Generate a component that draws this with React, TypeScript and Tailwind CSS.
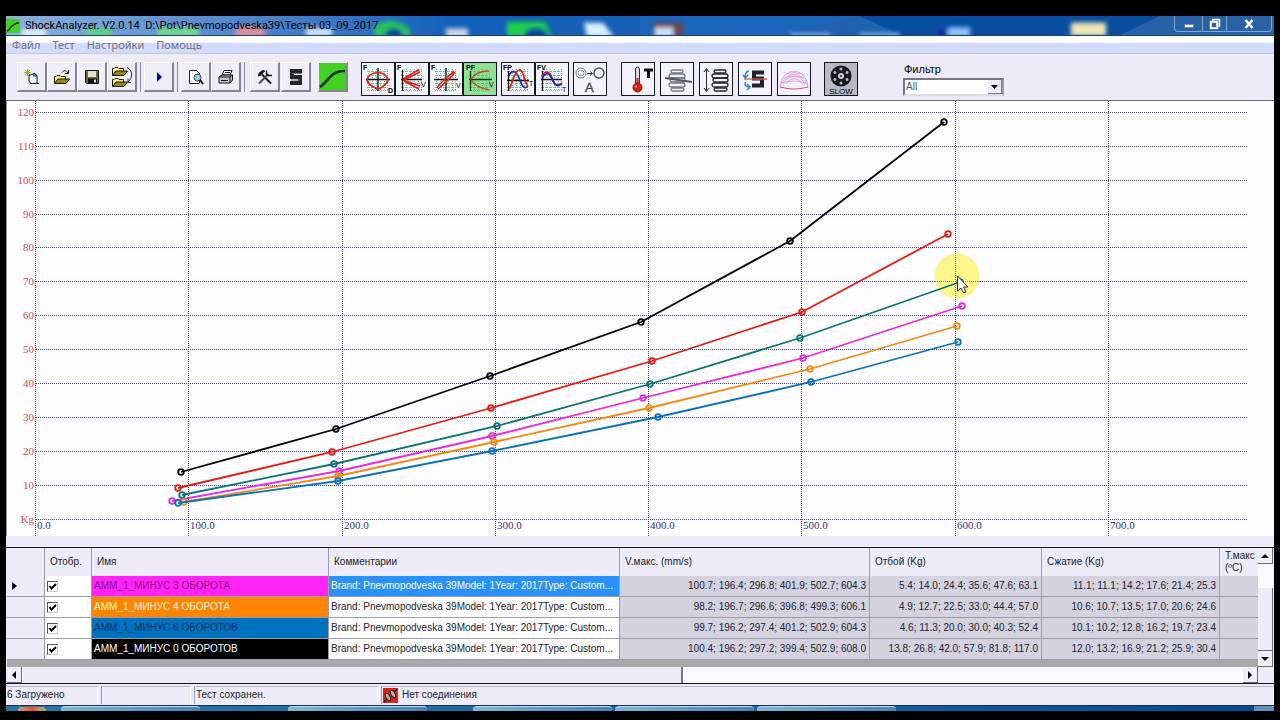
import { useState } from "react";
import type { ReactNode } from "react";

type Series = {
  id: string;
  color: string;
  points: [number, number][];
};

const series: Series[] = [
  { id: "m0", color: "#000000", points: [[181, 472], [336, 429], [490, 376], [641, 322], [790, 241], [944, 122]] },
  { id: "m1", color: "#e81a10", points: [[178, 488], [332, 452], [491, 408], [652, 361], [802, 312], [948, 234]] },
  { id: "m2", color: "#0a7472", points: [[182, 495], [334, 464], [497, 426], [650, 384], [800, 338], [960, 282]] },
  { id: "m3", color: "#e829dc", points: [[172, 501], [339, 471], [492, 436], [643, 398], [803, 358], [962, 306]] },
  { id: "m4", color: "#f08a14", points: [[184, 502], [338, 476], [494, 442], [649, 408], [810, 369], [957, 326]] },
  { id: "m6", color: "#0b72b8", points: [[178, 503], [338, 481], [492, 451], [658, 417], [811, 382], [958, 342]] },
];

const xTicks = [36, 189, 343, 496, 649, 802, 956, 1109];
const yTicks = [519, 485, 451, 417, 383, 349, 315, 281, 247, 214, 180, 146, 112];

const comment = "Brand: Pnevmopodveska 39Model: 1Year: 2017Type: Custom...";

const rows = [
  {
    name: "АММ_1_МИНУС 3 ОБОРОТА",
    nameClass: "bg-[#ff24f4] text-[#8a1590]",
    speed: "100.7; 196.4; 296.8; 401.9; 502.7; 604.3",
    rebound: "5.4; 14.0; 24.4; 35.6; 47.6; 63.1",
    compression: "11.1; 11.1; 14.2; 17.6; 21.4; 25.3",
  },
  {
    name: "АММ_1_МИНУС 4 ОБОРОТА",
    nameClass: "bg-[#ff8400] text-[#fff3dc]",
    speed: "98.2; 196.7; 296.6; 396.8; 499.3; 606.1",
    rebound: "4.9; 12.7; 22.5; 33.0; 44.4; 57.0",
    compression: "10.6; 10.7; 13.5; 17.0; 20.6; 24.6",
  },
  {
    name: "АММ_1_МИНУС 6 ОБОРОТОВ",
    nameClass: "bg-[#0072c0] text-[#06315f]",
    speed: "99.7; 196.2; 297.4; 401.2; 502.9; 604.3",
    rebound: "4.6; 11.3; 20.0; 30.0; 40.3; 52.4",
    compression: "10.1; 10.2; 12.8; 16.2; 19.7; 23.4",
  },
  {
    name: "АММ_1_МИНУС 0 ОБОРОТОВ",
    nameClass: "bg-black text-white",
    speed: "100.4; 196.2; 297.2; 399.4; 502.9; 608.0",
    rebound: "13.8; 26.8; 42.0; 57.9; 81.8; 117.0",
    compression: "12.0; 13.2; 16.9; 21.2; 25.9; 30.4",
  },
];

function ToolButton({ label, children }: { label: string; children: ReactNode }) {
  return (
    <button
      type="button"
      aria-label={label}
      className="flex h-[30px] w-[30px] items-center justify-center border-t border-r-2 border-b-2 border-l border-t-white border-r-[#85858f] border-b-[#85858f] border-l-white bg-[#efeef8]"
    >
      {children}
    </button>
  );
}

function ModeButton({ label, className = "bg-[#f3f3fb]", children }: { label: string; className?: string; children: ReactNode }) {
  return (
    <button type="button" aria-label={label} className={`h-[34px] w-[34px] border border-[#15151c] ${className}`}>
      <svg viewBox="0 0 32 32" className="block h-full w-full" fontFamily="Liberation Sans, sans-serif">
        {children}
      </svg>
    </button>
  );
}

function Separator() {
  return <div className="mx-[3px] h-[30px] w-px bg-[#8d8d98]" />;
}

function IconGrid({ color = "#79bd92" }: { color?: string }) {
  return (
    <g stroke={color} strokeWidth="1" strokeDasharray="1 1">
      {[8.5, 12.5, 16.5, 20.5, 24.5, 27.5].map((p) => (
        <path key={p} d={`M5 ${p}H27M${p - 2} 6V28`} />
      ))}
    </g>
  );
}

function Folder({ y = 0, x = 0 }: { y?: number; x?: number }) {
  return (
    <g transform={`translate(${x} ${y})`} stroke="#1a1a00" strokeWidth="1">
      <path d="M.5 9.500V2.500H2L3 1.500H6L7 2.500H11.500V5" fill="#f5ec7a" />
      <path d="M.5 9.500 4 5H15.500L12 9.500Z" fill="#8f8a14" />
    </g>
  );
}

function Coil({ color, x }: { color: string; x: number }) {
  return (
    <g fill="none" stroke={color} strokeWidth="1.300" transform={`translate(${x} 0)`}>
      <rect x="2" y="7" width="12" height="3" rx="1.500" />
      <rect x="0" y="11" width="16" height="4" rx="2" />
      <rect x="1" y="15" width="15" height="4" rx="2" />
      <rect x="0" y="20" width="16" height="4" rx="2" />
      <rect x="2" y="25" width="13" height="3" rx="1.500" />
    </g>
  );
}

function TitleBar() {
  return (
    <header className="relative flex h-5 items-center justify-between overflow-hidden border-b border-[#1c3f78] bg-linear-to-r from-[#8bb1dd] via-[#1260ba] via-35% to-[#2a62a4]">
      {/* desktop icons showing through the glass */}
      <svg viewBox="6 16 1268 20" preserveAspectRatio="none" className="absolute inset-0 h-full w-full">
        <defs>
          <filter id="glass" x="-20%" y="-60%" width="140%" height="220%">
            <feGaussianBlur stdDeviation="2" />
          </filter>
        </defs>
        <path d="M640 16H860L780 36H640Z" fill="#1a6cc4" opacity=".5" />
        <path d="M860 16H1160L1120 36H900Z" fill="#024a9e" opacity=".8" />
        <g filter="url(#glass)">
          <rect x="22" y="30" width="24" height="8" fill="#e8f2f0" />
          <rect x="85" y="29" width="26" height="10" fill="#5dce86" />
          <rect x="157" y="28" width="42" height="10" fill="#6fd98b" />
          <ellipse cx="250" cy="33" rx="16" ry="7" fill="#d98f97" />
          <rect x="306" y="29" width="26" height="8" fill="#d8e9f8" />
          <path d="M374 38V27Q392 14 410 30V38Z" fill="#27c25c" />
          <ellipse cx="394" cy="36" rx="9" ry="7" fill="#0b4f94" />
          <rect x="446" y="29" width="22" height="10" fill="#c9d6e6" />
          <path d="M507 22H545L552 38H507Z" fill="#1fce4d" />
          <ellipse cx="536" cy="37" rx="12" ry="9" fill="#08489a" />
          <path d="M584 23H603L614 38H587Z" fill="#d5f1ff" />
          <rect x="653" y="23" width="30" height="14" fill="#6d4550" />
          <rect x="655" y="28" width="18" height="10" fill="#cfe0f6" />
          <rect x="790" y="34" width="40" height="4" fill="#7db6ee" />
          <rect x="860" y="34" width="40" height="4" fill="#7db6ee" />
          <rect x="938" y="31" width="10" height="8" fill="#1129a8" />
          <rect x="948" y="28" width="22" height="10" fill="#8fc4fb" />
          <rect x="1071" y="23" width="35" height="14" fill="#ebe6b4" />
        </g>
      </svg>
      <div className="relative flex items-center gap-[5px]">
        <svg viewBox="0 0 14 14" className="h-3.5 w-3.5">
          <rect width="14" height="14" fill="#43cf24" />
          <path d="M1 12C4 11 5 4 13 4" fill="none" stroke="#082c06" strokeWidth="1.500" />
        </svg>
        <h1 className="font-[Roboto,sans-serif] text-[11px] leading-4 whitespace-pre text-black">
          {"ShockAnalyzer. V2.0.14  D:\\Pot\\Pnevmopodveska39\\Тесты 03_09_2017"}
        </h1>
      </div>
      <div className="relative mr-0.5 flex h-4 self-start rounded-b border border-t-0 border-[#7fa6d4] text-white">
        <button type="button" aria-label="Свернуть" className="flex w-7 items-center justify-center border-r border-[#7fa6d4]">
          <svg viewBox="0 0 12 12" className="h-3 w-3">
            <rect x="1.500" y="6.500" width="9" height="3" fill="#fff" stroke="#536c8c" strokeWidth=".5" />
          </svg>
        </button>
        <button type="button" aria-label="Развернуть" className="flex w-6 items-center justify-center border-r border-[#7fa6d4]">
          <svg viewBox="0 0 12 12" className="h-3 w-3" fill="none" stroke="#fff" strokeWidth="1.500">
            <path d="M4 3V1.500H10.500V8H9" />
            <rect x="1.800" y="3.800" width="6.400" height="6.400" strokeWidth="2" />
          </svg>
        </button>
        <button type="button" aria-label="Закрыть" className="flex w-11 items-center justify-center">
          <svg viewBox="0 0 12 12" className="h-3 w-3" stroke="#fff" strokeWidth="2.500">
            <path d="M2.500 2 9.500 10M9.500 2 2.500 10" />
          </svg>
        </button>
      </div>
    </header>
  );
}

function Menu() {
  return (
    <nav className="flex h-[18px] items-center gap-3 border-b border-[#c3c9e2] bg-linear-to-b from-white from-35% to-[#d3dbfa] to-45% pl-1.5 font-['Noto_Sans',sans-serif] text-[11px] leading-4 text-[#73737f]">
      <a href="#file">Файл</a>
      <a href="#test">Тест</a>
      <a href="#settings">Настройки</a>
      <a href="#help">Помощь</a>
    </nav>
  );
}

function Toolbar() {
  const [filter, setFilter] = useState("All");

  return (
    <div className="flex h-[46px] items-start pt-2 pl-[11px]">
      <ToolButton label="Новый">
        <svg viewBox="0 0 16 16" className="h-4 w-4">
          <path d="M3.500 0V7M0 3.500H7M1 1 6 6M6 1 1 6" stroke="#a8a820" strokeWidth="1" />
          <path d="M5 6.500 10.500 4.500 13 7V14L7 14.500 5 12Z" fill="#fff" stroke="#18363a" strokeWidth="1.200" />
          <path d="M7 14.500H15M10 5V7H13" stroke="#18363a" strokeWidth="1.200" fill="none" />
        </svg>
      </ToolButton>
      <ToolButton label="Открыть">
        <svg viewBox="0 0 16 16" className="h-4 w-4">
          <Folder y={5} />
          <path d="M8 3.500C10 1 12 1 14 4M14.500 1V4.500H11" fill="none" stroke="#111" />
        </svg>
      </ToolButton>
      <ToolButton label="Сохранить">
        <svg viewBox="0 0 16 16" className="h-4 w-4">
          <path d="M1.500 1.500H14.500V14.500H2.500L1.500 13.500Z" fill="#6f7022" stroke="#111" />
          <rect x="4" y="2" width="8" height="6" fill="#dedee4" />
          <rect x="4" y="9.500" width="9" height="5" fill="#111" />
          <rect x="10" y="10.500" width="2" height="3" fill="#ddd" />
        </svg>
      </ToolButton>
      <ToolButton label="Открыть несколько">
        <svg viewBox="0 0 22 22" className="h-[22px] w-[22px]">
          <Folder x={1} y={0} />
          <Folder x={1} y={11} />
          <path d="M16 1.500C22 4 22 12 17 16M17 12.500V16.500H20" fill="none" stroke="#222" />
        </svg>
      </ToolButton>
      <Separator />
      <ToolButton label="Старт">
        <svg viewBox="0 0 16 16" className="h-4 w-4">
          <path d="M6 3V13L11 8Z" fill="#06108c" />
        </svg>
      </ToolButton>
      <Separator />
      <ToolButton label="Просмотр">
        <svg viewBox="0 0 16 16" className="h-4 w-4">
          <path d="M1.500 1.500H8.500L11.500 4.500V14.500H1.500Z" fill="#fff" stroke="#222" />
          <circle cx="9.500" cy="8.500" r="3.500" fill="#8fd3e0" stroke="#33474d" />
          <path d="m12 11 3 4" stroke="#111" strokeWidth="2" />
        </svg>
      </ToolButton>
      <ToolButton label="Печать">
        <svg viewBox="0 0 16 16" className="h-4 w-4" stroke="#111">
          <path d="M4 6 6 1.500H14L12 6Z" fill="#fff" />
          <path d="M1 8 4 6H14.500V11L12 14H1Z" fill="#c8c8ce" />
          <path d="M1 8H12V14M12 8 14.500 6M3 11.500H10M7 3.500H12" fill="none" />
        </svg>
      </ToolButton>
      <Separator />
      <div className="mr-[7px] ml-0.5 flex gap-px">
        <ToolButton label="Инструменты">
          <svg viewBox="0 0 16 16" className="h-4 w-4" fill="none" stroke="#161616">
            <path d="M5 5.500 14 14.500" strokeWidth="2" />
            <path d="M1 7 2 4 6 1 8 2 5 5 3 7Z" fill="#161616" strokeWidth=".5" />
            <path d="M2 14.500 11.500 5" strokeWidth="2" stroke="#4a4a4e" />
            <path d="M9.500 1.500V5L11.500 6.500H15" strokeWidth="1.500" />
          </svg>
        </ToolButton>
        <ToolButton label="Амортизатор">
          <svg viewBox="0 0 16 18" className="h-[18px] w-4" fill="none" stroke="#25252a" strokeWidth="4">
            <path d="M14 3H4V9H12V15H2" />
            <path d="M4 5.500H14M3 12H12" stroke="#777780" strokeWidth="1" />
          </svg>
        </ToolButton>
      </div>
      <ToolButton label="График">
        <svg viewBox="0 0 27 27" className="h-[27px] w-[27px] shrink-0">
          <rect width="27" height="27" fill="#43cf24" />
          <path d="M1 24C9 19 12 7 26 8" fill="none" stroke="#0a2e08" strokeWidth="2.500" />
        </svg>
      </ToolButton>

      <div className="ml-[13px] flex">
        <ModeButton label="F-D">
          <IconGrid />
          <path d="M16 5V28M4 16.500H28" stroke="#111" strokeWidth="1.300" />
          <path d="M5 17C6 12 9 10 16 9.500C22 10 25 12 26 17C25 22 20 24 16 26.500C11 24 6 22 5 17Z" fill="none" stroke="#dc2418" strokeWidth="1.700" />
          <text x="1" y="7" fontSize="7" fontWeight="bold">F</text>
          <text x="26" y="30" fontSize="7" fontWeight="bold">D</text>
        </ModeButton>
        <ModeButton label="F-V">
          <IconGrid />
          <path d="M6.500 7V28M5 16.500H26" stroke="#111" strokeWidth="1.300" />
          <path d="M7 16 23 6.500M8 17 24 9M7 17 24 23M8 18 23 26" fill="none" stroke="#dc2418" strokeWidth="1.500" />
          <text x="1" y="7" fontSize="7" fontWeight="bold">F</text>
          <text x="25" y="24" fontSize="7">V</text>
        </ModeButton>
        <ModeButton label="F-V общий">
          <IconGrid />
          <path d="M16 5V28M4 16.500H28" stroke="#111" strokeWidth="1.300" />
          <path d="M7 25C10 19 18 15 24 8M8 26C14 21 20 16 25 9" fill="none" stroke="#dc2418" strokeWidth="1.500" />
          <text x="1" y="7" fontSize="7" fontWeight="bold">F</text>
          <text x="26" y="25" fontSize="7">V</text>
        </ModeButton>
        <ModeButton label="PF-V" className="bg-[#8fe295]">
          <IconGrid color="#62be71" />
          <path d="M6.500 8V28M5 16.500H28" stroke="#163616" strokeWidth="1.300" />
          <path d="M7 16C11 10 17 8 25 8M7 17C12 24 18 25 25 27" fill="none" stroke="#c4482c" strokeWidth="1.300" />
          <text x="2" y="7" fontSize="7" fontWeight="bold">PF</text>
          <text x="25" y="24" fontSize="7">V</text>
        </ModeButton>
      </div>
      <div className="ml-1 flex">
        <ModeButton label="FP-T">
          <IconGrid />
          <path d="M6.500 8V28M5 17.500H27" stroke="#111" strokeWidth="1.300" />
          <path d="M7 13C9 7 14 7 17 15S22 27 26 23" fill="none" stroke="#1c22c8" strokeWidth="1.700" />
          <path d="M7 26C11 20 12 8 17 7S22 20 26 23" fill="none" stroke="#dc2418" strokeWidth="1.700" />
          <text x="1" y="7" fontSize="7" fontWeight="bold">FP</text>
          <text x="27" y="23" fontSize="7">T</text>
        </ModeButton>
        <ModeButton label="FV-T">
          <IconGrid />
          <path d="M6.500 8V28M5 16.500H26" stroke="#111" strokeWidth="1.300" />
          <path d="M6 14C9 7 14 8 16 15S22 25 26 20" fill="none" stroke="#dc2418" strokeWidth="1.700" />
          <path d="M6 16C9 9 13 9 16 16S21 23 26 21" fill="none" stroke="#1c22c8" strokeWidth="1.700" />
          <text x="1" y="7" fontSize="7" fontWeight="bold">FV</text>
          <text x="26" y="29" fontSize="7">T</text>
        </ModeButton>
      </div>
      <div className="ml-1 flex">
        <ModeButton label="Автоматически">
          <circle cx="7" cy="10" r="5" fill="none" stroke="#7a7a80" />
          <circle cx="7" cy="10" r="3" fill="none" stroke="#a2a2a8" />
          <circle cx="25" cy="10" r="5" fill="none" stroke="#55555b" strokeWidth="1.500" />
          <path d="M13 10.500H18M16 8.500 18.500 10.500 16 12.500" fill="none" stroke="#333" />
          <text x="11" y="29" fontSize="13" fill="#3b3b42" stroke="#3b3b42" strokeWidth=".3">A</text>
        </ModeButton>
      </div>
      <div className="ml-3.5 flex gap-[5px]">
        <ModeButton label="Температура">
          <rect x="13.500" y="4" width="4" height="18" rx="2" fill="#dadae0" stroke="#333" />
          <rect x="14.500" y="15" width="2" height="8" fill="#e01b12" />
          <circle cx="15.500" cy="24.500" r="4.500" fill="#e01b12" stroke="#7d1411" />
          <circle cx="14" cy="23.500" r="1" fill="#ffb9b0" />
          <path d="M22 7H31M26.500 6V15" stroke="#0c0c0c" strokeWidth="3" />
        </ModeButton>
        <ModeButton label="Пружина">
          <Coil color="#77777d" x={8} />
          <path d="M4 15 31 19" stroke="#55555b" strokeWidth="2" />
        </ModeButton>
        <ModeButton label="Ход пружины">
          <Coil color="#26262c" x={12} />
          <path d="M6.500 6V28M4 9 6.500 5.500 9 9M4 25 6.500 28.500 9 25" fill="none" stroke="#26262c" />
        </ModeButton>
        <ModeButton label="Обновить">
          <path d="M25 9.500H15V15.500H23V22.500H13" fill="none" stroke="#222228" strokeWidth="4" />
          <path d="M5 16H28" stroke="#dc5a44" strokeWidth="1.300" />
          <path d="M10 8C6 9 6 12 6 14M4 12 6 15 9 12M6 19C6 23 7 24 11 24M8 21 11 24 8 27" fill="none" stroke="#2a8bd8" strokeWidth="1.500" />
        </ModeButton>
        <ModeButton label="Купол">
          <g fill="none" stroke="#e08bd2" strokeWidth=".8">
            <path d="M2 24C4 3 28 3 30 24" />
            <path d="M3 22C8 8 24 8 29 22M5 21C10 11 22 11 27 21M8 21C12 14 20 14 24 21" />
            <path d="M4 20Q16 16 28 20M6 15Q16 11 26 15M9 11Q16 8 23 11" />
          </g>
          <path d="M2 24Q16 28 30 24" fill="none" stroke="#e0506c" strokeWidth="1.200" />
        </ModeButton>
      </div>
      <div className="ml-[13px]">
        <ModeButton label="Медленно" className="bg-[#b9b9c3]">
          <circle cx="16" cy="13" r="10.500" fill="#1a1a1d" />
          <circle cx="16" cy="13" r="3" fill="#cfcfd6" />
          <circle cx="16" cy="13" r="1" fill="#222" />
          {[0, 60, 120, 180, 240, 300].map((angle) => (
            <circle key={angle} cx="16" cy="6" r="1.500" fill="#b9b9c3" transform={`rotate(${angle} 16 13)`} />
          ))}
          <text x="16" y="31" fontSize="8" textAnchor="middle">SLOW</text>
        </ModeButton>
      </div>

      <div className="ml-[45px] flex w-[101px] flex-col gap-0.5">
        <label htmlFor="filter" className="pl-px text-[11px] leading-[14px]">
          Фильтр
        </label>
        <div className="relative">
          <select
            id="filter"
            value={filter}
            onChange={(e) => setFilter(e.target.value)}
            className="block h-[18px] w-full appearance-none border-2 border-t-[#77777f] border-r-[#9c9ca6] border-b-[#dcdce6] border-l-[#77777f] bg-[#fdfdff] pl-px text-[10px] leading-[14px] text-[#55555f]"
          >
            <option>All</option>
          </select>
          <span className="pointer-events-none absolute top-0.5 right-0.5 flex h-3.5 w-3.5 items-center justify-center border-r border-b border-[#77777f] bg-[#ecebf7]">
            <svg viewBox="0 0 7 4" className="h-1 w-[7px]">
              <path d="M0 0H7L3.500 4Z" />
            </svg>
          </span>
        </div>
      </div>
    </div>
  );
}

function Chart() {
  return (
    <svg
      viewBox="6 101 1268 435"
      className="block h-auto w-full border-t border-[#6d6d76] bg-[#fdfdff]"
      fontFamily="Liberation Serif, serif"
      fontSize="11"
    >
      <path d="M6.500 101V536" stroke="#8d8d98" />
      <g stroke="#4a44a4" strokeWidth="1" strokeDasharray="1 1">
        {xTicks.map((x) => (
          <path key={x} d={`M${x - 0.5} 101V536`} />
        ))}
        {yTicks.map((y) => (
          <path key={y} d={`M36 ${y + 0.5}H1248`} />
        ))}
      </g>
      <g fill="#dc4a4a" textAnchor="end">
        {yTicks.map((y, i) => (
          <text key={y} x="34" y={y + 4}>
            {i === 0 ? "Kg" : i * 10}
          </text>
        ))}
      </g>
      <g fill="#34348c">
        {xTicks.map((x, i) => (
          <text key={x} x={x + 1} y="529">
            {i * 100}.0
          </text>
        ))}
      </g>
      <circle cx="957" cy="276" r="22.500" fill="#fbf58c" />
      <path d="M955.500 253V299M935 281.500H980" stroke="#8a8468" strokeDasharray="1 1" />
      {series.map((s) => (
        <g key={s.id} fill="none" stroke={s.color} strokeWidth="1.800">
          <polyline points={s.points.map((p) => p.join(",")).join(" ")} />
          {s.points.map(([x, y]) => (
            <circle key={x} cx={x} cy={y} r="2.800" />
          ))}
        </g>
      ))}
      <path d="M957.500 276V291L961 288 963.500 293 966 292 963.500 287H968Z" fill="#fff" stroke="#33333a" />
    </svg>
  );
}

function ResultsTable() {
  const [shown, setShown] = useState([true, true, true, true]);

  const toggle = (index: number) => {
    setShown(shown.map((value, i) => (i === index ? !value : value)));
  };

  const head = "border-r border-[#9c9ca8] px-[5px] text-left font-normal";
  const value = "border-r border-b border-[#9c9ca8] bg-[#d3d2de] pr-[3px] text-right text-[#222230]";

  return (
    <table className="w-full table-fixed border-separate border-spacing-0 text-[10px] leading-3 whitespace-nowrap text-[#222230]">
      <colgroup>
        <col className="w-[38px]" />
        <col className="w-[47px]" />
        <col className="w-[237px]" />
        <col className="w-[291px]" />
        <col className="w-[250px]" />
        <col className="w-[172px]" />
        <col className="w-[178px]" />
        <col />
      </colgroup>
      <thead>
        <tr className="h-7">
          <th className={head} aria-label="Строка"></th>
          <th className={head}>Отобр.</th>
          <th className={head}>Имя</th>
          <th className={head}>Комментарии</th>
          <th className={head}>V.макс. (mm/s)</th>
          <th className={head}>Отбой (Kg)</th>
          <th className={head}>Сжатие (Kg)</th>
          <th className="pl-[5px] text-left font-normal">
            Т.макс
            <br />
            (ºC)
          </th>
        </tr>
      </thead>
      <tbody>
        {rows.map((row, i) => (
          <tr key={row.name} className="h-[21px]">
            <td className="border-r border-b border-[#9c9ca8] pl-1">
              {i === 0 && (
                <svg viewBox="0 0 5 8" className="ml-px h-2 w-[5px]">
                  <path d="M0 0V8L5 4Z" />
                </svg>
              )}
            </td>
            <td className="border-r border-b border-[#9c9ca8] bg-white pl-0.5">
              <span className="relative block h-[11px] w-[11px]">
                <input
                  type="checkbox"
                  aria-label={row.name}
                  checked={shown[i]}
                  onChange={() => toggle(i)}
                  className="block h-full w-full appearance-none border border-t-[#55555f] border-r-[#c6c6d0] border-b-[#c6c6d0] border-l-[#55555f] bg-white"
                />
                {shown[i] && (
                  <svg viewBox="0 0 11 11" className="pointer-events-none absolute inset-0 h-full w-full">
                    <path d="M2.500 5 4.500 7.500 9 3" fill="none" stroke="#000" strokeWidth="2" />
                  </svg>
                )}
              </span>
            </td>
            <td className={`border-r border-b border-[#9c9ca8] pl-0.5 ${row.nameClass}`}>{row.name}</td>
            <td
              className={`overflow-hidden border-r border-b border-[#9c9ca8] pl-0.5 ${
                i === 0 ? "bg-[#2a90fa] text-white" : "bg-white"
              }`}
            >
              {comment}
            </td>
            <td className={value}>{row.speed}</td>
            <td className={value}>{row.rebound}</td>
            <td className={value}>{row.compression}</td>
            <td className="border-b border-[#9c9ca8] bg-[#d3d2de]"></td>
          </tr>
        ))}
      </tbody>
    </table>
  );
}

function ScrollButton({ label, path }: { label: string; path: string }) {
  return (
    <button
      type="button"
      aria-label={label}
      className="flex h-4 w-[15px] shrink-0 items-center justify-center border-r border-b border-[#6d6d76] bg-[#efeef8]"
    >
      <svg viewBox="0 0 8 8" className="h-2 w-2">
        <path d={path} />
      </svg>
    </button>
  );
}

function ResultsPanel() {
  return (
    <section className="flex border-y border-[#15151c] pr-px pl-px">
      <div className="flex min-w-0 grow flex-col">
        <ResultsTable />
        <div className="h-[7px] bg-[#a9a9ad]" />
        <div className="flex bg-[#f9f9ff]">
          <ScrollButton label="Влево" path="M6 0V8L2 4Z" />
          <div className="grow-[54] border-r-2 border-l border-r-[#77777f] border-l-white bg-[#ecebf7]" />
          <div className="grow-[46]" />
          <ScrollButton label="Вправо" path="M2 0V8L6 4Z" />
        </div>
      </div>
      <div className="flex w-[15px] flex-col bg-[#f9f9ff]">
        <ScrollButton label="Вверх" path="M0 6H8L4 2Z" />
        <div className="h-6" />
        <div className="grow border-r border-b border-[#6d6d76] bg-[#ecebf7]" />
        <ScrollButton label="Вниз" path="M0 2H8L4 6Z" />
        <div className="h-4 bg-[#ecebf7]" />
      </div>
    </section>
  );
}

function StatusBar() {
  const cell = "flex h-[18px] items-center border-t border-r border-t-[#b9b9c4] border-r-white";

  return (
    <footer className="flex h-[21px] items-center gap-[3px] text-[10px] leading-4 text-[#222230]">
      <div className={`${cell} w-[92px] pl-px`}>6 Загружено</div>
      <div className={`${cell} w-[90px] border-l border-l-[#9c9ca8]`}></div>
      <div className={`${cell} w-[184px] border-l border-l-[#9c9ca8] pl-px`}>Тест сохранен.</div>
      <div className={`${cell} grow gap-1 border-l border-l-[#9c9ca8] pl-px`}>
        <svg viewBox="0 0 15 15" className="h-[15px] w-[15px]">
          <rect width="15" height="15" fill="#e02414" />
          <g stroke="#1d1d20" fill="#b9b2b4">
            <path d="M1 14 4 11M11 4 14 1" strokeWidth="1.500" />
            <ellipse cx="5" cy="9" rx="4" ry="2" transform="rotate(60 5 9)" />
            <ellipse cx="10" cy="6" rx="4" ry="2" transform="rotate(60 10 6)" />
          </g>
        </svg>
        Нет соединения
      </div>
    </footer>
  );
}

function Taskbar() {
  const task = "h-[5px] w-[139px] rounded-t-sm border-t border-[#b9dbef] bg-linear-to-r from-[#82b6d6] to-[#4484b4]";

  return (
    <div className="flex h-1.5 items-end gap-[3px] border-t border-[#16304c] bg-linear-to-r from-[#2c74a4] via-[#1b68a4] via-50% to-[#074a92]">
      <div className="mr-3 ml-3 h-1 w-7 rounded-t-full bg-linear-to-r from-[#b9a08c] via-[#e0501c] to-[#9cb48c]" />
      <div className={task}></div>
      <div className="w-[82px]" />
      <div className={task}></div>
      <div className="w-10" />
      <div className={task}></div>
      <div className={task}></div>
      <div className={task}></div>
      <div className="grow" />
      <div className="h-[5px] w-5 bg-[#5f93bd]" />
    </div>
  );
}

export default function App() {
  return (
    <div className="min-h-screen bg-black px-1.5 pt-4 font-['Liberation_Sans',sans-serif]">
      <main className="bg-[#ecebf7]">
        <TitleBar />
        <Menu />
        <Toolbar />
        <Chart />
        <div className="h-[11px]" />
        <ResultsPanel />
        <StatusBar />
        <Taskbar />
      </main>
    </div>
  );
}
